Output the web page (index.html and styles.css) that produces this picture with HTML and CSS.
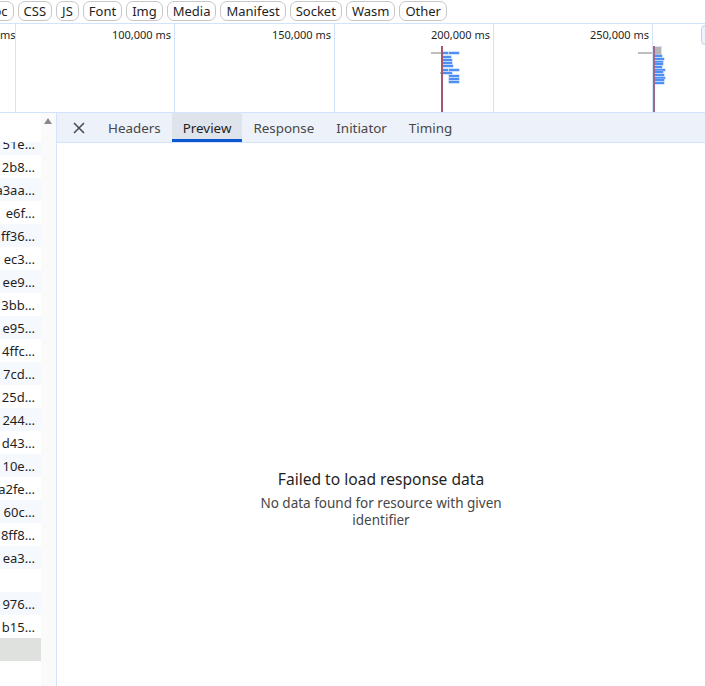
FILE: index.html
```html
<!DOCTYPE html>
<html lang="en">
<head>
    <meta charset="UTF-8">
    <meta name="viewport" content="width=device-width, initial-scale=1.0">
    <title>Network - Preview</title>
    <link rel="stylesheet" href="styles.css">
</head>
<body>
    <!-- Resource type filter chips -->
    <div class="filter-bar">
        <span class="chip chip-cut">Doc</span>
        <span class="chip">CSS</span>
        <span class="chip">JS</span>
        <span class="chip">Font</span>
        <span class="chip">Img</span>
        <span class="chip">Media</span>
        <span class="chip">Manifest</span>
        <span class="chip">Socket</span>
        <span class="chip">Wasm</span>
        <span class="chip">Other</span>
    </div>

    <!-- Overview timeline -->
    <div class="overview">
        <div class="grid">
            <div class="cell"><span>ms</span></div>
            <div class="cell"><span>100,000 ms</span></div>
            <div class="cell"><span>150,000 ms</span></div>
            <div class="cell"><span>200,000 ms</span></div>
            <div class="cell"><span>250,000 ms</span></div>
            <div class="cell cell-last"></div>
        </div>

        <!-- first burst of requests -->
        <div class="bar wait" style="left:431px;top:28px;width:10px"></div>
        <div class="bar" style="left:443px;top:28px;width:5px"></div>
        <div class="bar" style="left:449px;top:28px;width:10px"></div>
        <div class="bar" style="left:443px;top:32px;width:8px"></div>
        <div class="bar" style="left:443px;top:35px;width:9px"></div>
        <div class="bar" style="left:443px;top:38px;width:9px"></div>
        <div class="bar" style="left:443px;top:41px;width:10px"></div>
        <div class="bar" style="left:443px;top:45px;width:5px"></div>
        <div class="bar" style="left:449px;top:45px;width:10px"></div>
        <div class="bar wait" style="left:440px;top:48px;width:3px"></div>
        <div class="bar" style="left:443px;top:48px;width:9px"></div>
        <div class="bar" style="left:449px;top:51px;width:10px"></div>
        <div class="bar" style="left:449px;top:54px;width:10px"></div>
        <div class="bar" style="left:449px;top:57px;width:10px"></div>
        <div class="event-line load" style="left:441px"></div>

        <!-- second burst -->
        <div class="bar wait" style="left:638px;top:28px;width:15px"></div>
        <div class="bar-block" style="left:652px;top:22px"></div>
        <div class="bar" style="left:655px;top:31px;width:7px"></div>
        <div class="bar" style="left:655px;top:34px;width:9px"></div>
        <div class="bar" style="left:655px;top:37px;width:8px"></div>
        <div class="bar" style="left:655px;top:39px;width:8px"></div>
        <div class="bar" style="left:655px;top:42px;width:7px"></div>
        <div class="bar" style="left:655px;top:45px;width:10px"></div>
        <div class="bar" style="left:655px;top:47px;width:8px"></div>
        <div class="bar" style="left:655px;top:50px;width:9px"></div>
        <div class="bar" style="left:655px;top:53px;width:10px"></div>
        <div class="bar" style="left:655px;top:55px;width:9px"></div>
        <div class="bar" style="left:655px;top:58px;width:9px"></div>
        <div class="event-line dcl" style="left:653px"></div>

        <div class="window-handle"></div>
    </div>

    <div class="split">
        <!-- Request list (scrolled, names cut) -->
        <div class="request-list">
            <div class="names">
                <div class="names-header"></div>
                <div class="rows">
                    <div class="rows-inner">
                        <div class="row"><span>51e…</span></div>
                        <div class="row"><span>2b8…</span></div>
                        <div class="row"><span>a3aa…</span></div>
                        <div class="row"><span>e6f…</span></div>
                        <div class="row"><span>ff36…</span></div>
                        <div class="row"><span>ec3…</span></div>
                        <div class="row"><span>ee9…</span></div>
                        <div class="row"><span>3bb…</span></div>
                        <div class="row"><span>e95…</span></div>
                        <div class="row"><span>4ffc…</span></div>
                        <div class="row"><span>7cd…</span></div>
                        <div class="row"><span>25d…</span></div>
                        <div class="row"><span>244…</span></div>
                        <div class="row"><span>d43…</span></div>
                        <div class="row"><span>10e…</span></div>
                        <div class="row"><span>a2fe…</span></div>
                        <div class="row"><span>60c…</span></div>
                        <div class="row"><span>8ff8…</span></div>
                        <div class="row"><span>ea3…</span></div>
                        <div class="row"><span></span></div>
                        <div class="row"><span>976…</span></div>
                        <div class="row"><span>b15…</span></div>
                        <div class="row selected"><span></span></div>
                    </div>
                </div>
            </div>
            <div class="scrollbar">
                <span class="scroll-up"></span>
            </div>
        </div>

        <!-- Request details -->
        <div class="details">
            <div class="tabs">
                <span class="tab-close">
                    <svg width="12" height="12" viewBox="0 0 12 12"><path d="M1 1L11 11M11 1L1 11" stroke="#474747" stroke-width="1.5" fill="none"/></svg>
                </span>
                <span class="tab">Headers</span>
                <span class="tab active">Preview</span>
                <span class="tab">Response</span>
                <span class="tab">Initiator</span>
                <span class="tab">Timing</span>
            </div>
            <div class="empty-state">
                <div class="empty-title">Failed to load response data</div>
                <div class="empty-text">No data found for resource with given identifier</div>
            </div>
        </div>
    </div>
</body>
</html>
```

FILE: styles.css
```css
* {
    box-sizing: border-box;
}
body {
    margin: 0;
    width: 705px;
    height: 686px;
    overflow: hidden;
    font-family: "Noto Sans", "Open Sans", Arial, sans-serif;
    font-size: 13px;
    color: #1f1f1f;
    background: #ffffff;
}

/* filter chips */
.filter-bar {
    height: 24px;
    display: flex;
    align-items: flex-start;
    gap: 4px;
    padding-top: 1px;
    border-bottom: 1px solid #d3e3fd;
    white-space: nowrap;
    overflow: hidden;
}
.chip {
    flex: none;
    height: 20px;
    line-height: 18px;
    padding: 0 5px;
    border: 1px solid #c7c7c7;
    border-radius: 7px;
}
.chip-cut {
    margin-left: -22px;
}

/* overview */
.overview {
    position: relative;
    height: 89px;
    border-bottom: 1px solid #d3e3fd;
    overflow: hidden;
}
.grid {
    display: grid;
    grid-template-columns: 16px 159px 160px 159px 159px 1fr;
    height: 100%;
}
.cell {
    border-right: 1px solid #d3e3fd;
    text-align: right;
    padding: 4px 3px 0 0;
    font-size: 11px;
    line-height: 14px;
    white-space: nowrap;
    overflow: hidden;
}
.cell-last {
    border-right: none;
}
.bar {
    position: absolute;
    height: 2px;
    background: #4f8ff2;
    box-shadow: 0 0 0 0.5px #a8c7fa;
}
.bar.wait {
    background: #bdbdbd;
    box-shadow: none;
}
.bar-block {
    position: absolute;
    width: 10px;
    height: 10px;
    background: #b5b5b5;
    border: 1px solid #d6e2f6;
}
.event-line {
    position: absolute;
    top: 22px;
    bottom: 0;
    width: 2px;
}
.event-line.load {
    background: #a8566e;
}
.event-line.dcl {
    background: #9d6a8e;
}
.window-handle {
    position: absolute;
    left: 701px;
    top: 1px;
    width: 12px;
    height: 20px;
    border: 1px solid #c5d2e6;
    border-radius: 4px;
    background: #eef3fb;
}

/* split view */
.split {
    display: flex;
    height: 573px;
}
.request-list {
    width: 57px;
    display: flex;
    border-right: 1px solid #d3e3fd;
}
.names {
    width: 41px;
    display: flex;
    flex-direction: column;
}
.names-header {
    height: 29px;
    flex: none;
    background: #ffffff;
}
.rows {
    flex: 1;
    overflow: hidden;
}
.rows-inner {
    margin-top: -10px;
}
.row {
    height: 23px;
    display: flex;
    justify-content: flex-end;
    align-items: center;
    padding-right: 6px;
    overflow: hidden;
    white-space: nowrap;
}
.row:nth-child(even) {
    background: #ffffff;
}
.row:nth-child(odd) {
    background: #f5f8fd;
}
.row.selected {
    background: #dfe1de;
}
.scrollbar {
    width: 15px;
    background: #fafafa;
    position: relative;
}
.scroll-up {
    position: absolute;
    left: 3px;
    top: 5px;
    width: 0;
    height: 0;
    border-left: 4px solid transparent;
    border-right: 4px solid transparent;
    border-bottom: 6px solid #8a8a8a;
}

/* details pane */
.details {
    flex: 1;
    display: flex;
    flex-direction: column;
}
.tabs {
    height: 30px;
    flex: none;
    display: flex;
    align-items: stretch;
    background: #edf2fa;
    border-bottom: 1px solid #d3e3fd;
    font-size: 13.4px;
}
.tab-close {
    width: 40px;
    display: flex;
    align-items: center;
    justify-content: center;
    padding-left: 4px;
}
.tab {
    display: flex;
    align-items: center;
    padding: 0 11px;
    color: #474747;
    white-space: nowrap;
}
.tab.active {
    background: #dfe4ec;
    color: #1f1f1f;
    box-shadow: inset 0 -3px 0 #0b57d0;
    border-radius: 2px 2px 0 0;
}

.empty-state {
    display: flex;
    flex-direction: column;
    align-items: center;
    text-align: center;
    padding-top: 327px;
}
.empty-title {
    font-size: 15.6px;
    line-height: 18px;
    color: #1f1f1f;
    margin-bottom: 7px;
}
.empty-text {
    max-width: 250px;
    font-size: 13.5px;
    line-height: 17px;
    color: #474747;
}
```
